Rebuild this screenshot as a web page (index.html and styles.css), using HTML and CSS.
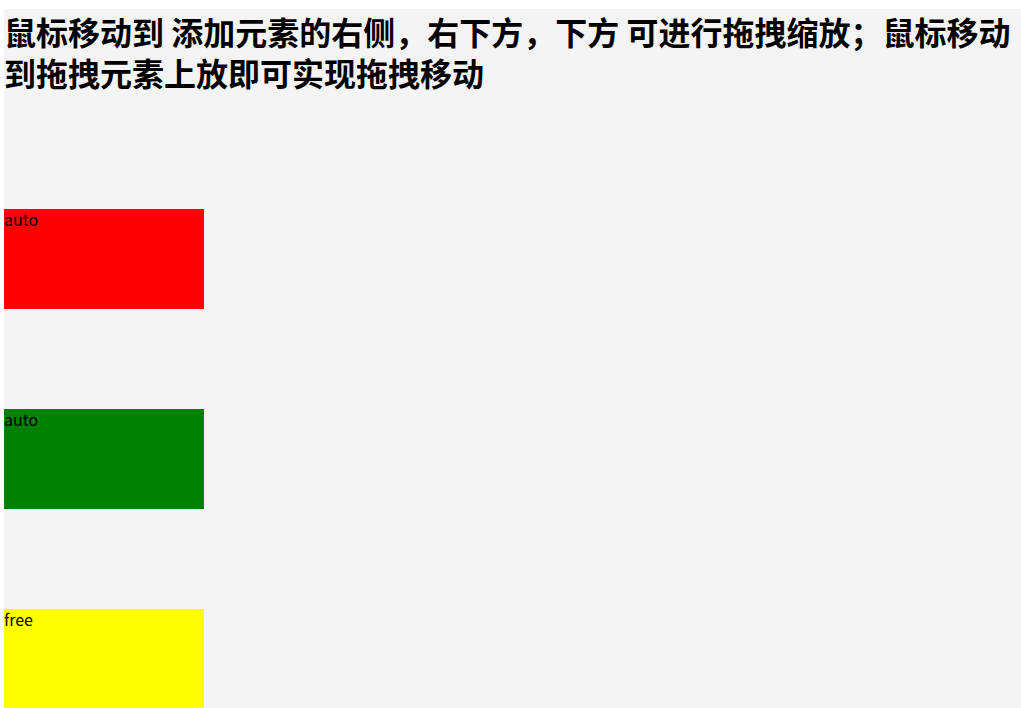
FILE: index.html
```html
<!DOCTYPE html>
<html lang="zh-CN">
<head>
<meta charset="utf-8">
<title>拖拽缩放</title>
<link rel="stylesheet" href="styles.css">
</head>
<body>
<div class="page">
  <h1 class="title">鼠标移动到 添加元素的右侧，右下方，下方 可进行拖拽缩放；鼠标移动到拖拽元素上放即可实现拖拽移动</h1>
  <div class="box box-red">auto</div>
  <div class="box box-green">auto</div>
  <div class="box box-yellow">free</div>
</div>
</body>
</html>
```
FILE: styles.css
```css
html, body {
  margin: 0;
  padding: 0;
  background: #ffffff;
}
.page {
  margin: 9px 0 0 4px;
  padding-top: 2px;
  min-height: 699px;
  background: #f4f4f4;
  font-family: "Noto Sans CJK SC", "Noto Sans", sans-serif;
  font-size: 16px;
  color: #000;
  overflow: hidden;
}
.title {
  margin: 0;
  font-size: 32px;
  line-height: 41px;
  font-weight: bold;
}
.box {
  width: 200px;
  height: 100px;
  margin-top: 100px;
  line-height: 21px;
}
.box-red {
  margin-top: 116px;
  background: #ff0000;
}
.box-green {
  background: #008000;
}
.box-yellow {
  background: #ffff00;
}
```
